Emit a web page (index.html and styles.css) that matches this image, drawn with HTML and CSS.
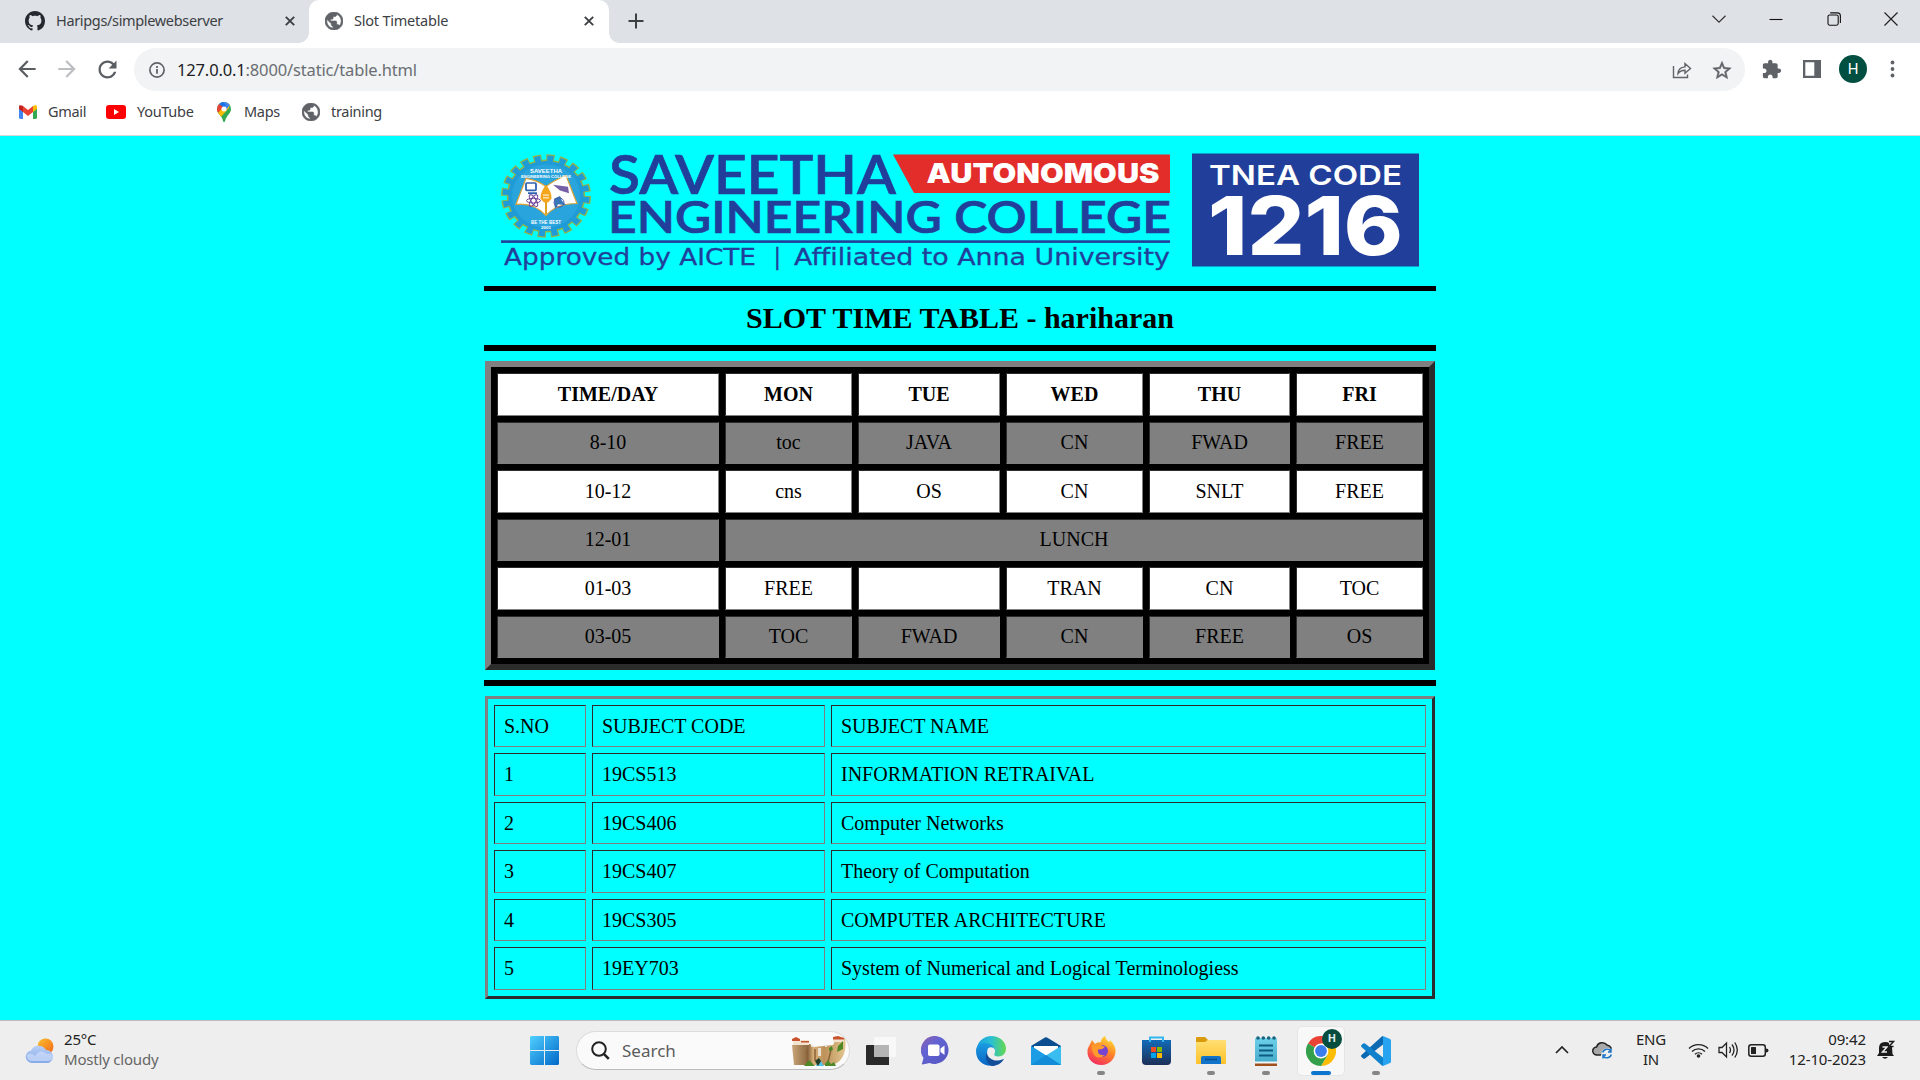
FILE: index.html
```html
<!DOCTYPE html>
<html lang="en">
<head>
<meta charset="utf-8">
<title>Slot Timetable</title>
<link rel="stylesheet" href="styles.css">
</head>
<body>
<svg class="defs" width="0" height="0" aria-hidden="true">
  <symbol id="globe" viewBox="2 2 20 20"><path d="M12 2C6.48 2 2 6.48 2 12s4.48 10 10 10 10-4.48 10-10S17.52 2 12 2zm-1 17.93c-3.95-.49-7-3.85-7-7.93 0-.62.08-1.21.21-1.79L9 15v1c0 1.1.9 2 2 2v1.93zm6.9-2.54c-.26-.81-1-1.39-1.9-1.39h-1v-3c0-.55-.45-1-1-1H8v-2h2c.55 0 1-.45 1-1V7h2c1.1 0 2-.9 2-2v-.41c2.93 1.19 5 4.06 5 7.41 0 2.08-.8 3.97-2.1 5.39z" fill="#5f6368" stroke="#5f6368" stroke-width=".7"/></symbol>
  <symbol id="cross" viewBox="0 0 10 10"><path d="M.8.8l8.4 8.4M9.2.8L.8 9.2" stroke="#3c4043" stroke-width="1.9"/></symbol>
</svg>

<header class="browser">
  <div class="tabstrip">
    <div class="tab">
      <svg class="fav-gh" viewBox="0 0 16 16" width="20" height="20"><path fill="#24292f" d="M8 0C3.58 0 0 3.58 0 8c0 3.54 2.29 6.53 5.47 7.59.4.07.55-.17.55-.38 0-.19-.01-.82-.01-1.49-2.01.37-2.53-.49-2.69-.94-.09-.23-.48-.94-.82-1.13-.28-.15-.68-.52-.01-.53.63-.01 1.08.58 1.23.82.72 1.21 1.87.87 2.33.66.07-.52.28-.87.51-1.07-1.78-.2-3.64-.89-3.64-3.95 0-.87.31-1.59.82-2.15-.08-.2-.36-1.02.08-2.12 0 0 .67-.21 2.2.82.64-.18 1.32-.27 2-.27s1.36.09 2 .27c1.53-1.04 2.2-.82 2.2-.82.44 1.1.16 1.92.08 2.12.51.56.82 1.27.82 2.15 0 3.07-1.87 3.75-3.65 3.95.29.25.54.73.54 1.48 0 1.07-.01 1.93-.01 2.2 0 .21.15.46.55.38A8.01 8.01 0 0 0 16 8c0-4.42-3.58-8-8-8z"/></svg>
      <span class="tab-title t1">Haripgs/simplewebserver</span>
      <svg width="10" height="10"><use href="#cross"/></svg>
    </div>
    <div class="tab active">
      <svg width="18" height="18"><use href="#globe"/></svg>
      <span class="tab-title t2">Slot Timetable</span>
      <svg width="10" height="10"><use href="#cross"/></svg>
    </div>
    <svg class="plus" width="16" height="16" viewBox="0 0 16 16"><path d="M8 .5v15M.5 8h15" stroke="#3c4043" stroke-width="2"/></svg>
    <div class="winctl">
      <svg width="14" height="14" viewBox="0 0 14 14"><path d="M.5 3.8L7 10.2l6.5-6.4" fill="none" stroke="#333" stroke-width="1.2"/></svg>
      <svg width="14" height="14" viewBox="0 0 14 14"><path d="M.5 7.5h13" stroke="#111" stroke-width="1.1"/></svg>
      <svg width="14" height="14" viewBox="0 0 14 14"><rect x="1" y="3" width="10.2" height="10.2" rx="1.6" fill="none" stroke="#111" stroke-width="1.1"/><path d="M3.2.9h7.2a3 3 0 0 1 3 3v7" fill="none" stroke="#111" stroke-width="1.1"/></svg>
      <svg width="14" height="14" viewBox="0 0 14 14"><path d="M.5.5l13 13M13.500.5l-13 13" stroke="#222" stroke-width="1.2"/></svg>
    </div>
  </div>
  <div class="toolbar">
    <svg width="26" height="26" viewBox="0 0 24 24"><path fill="#5a5d61" d="M20 11H7.83l5.59-5.590L12 4l-8 8 8 8 1.410-1.410L7.830 13H20v-2z"/></svg>
    <svg width="26" height="26" viewBox="0 0 24 24"><path fill="#bcbec1" d="M4 11h12.170l-5.590-5.590L12 4l8 8-8 8-1.410-1.410L16.170 13H4v-2z"/></svg>
    <svg width="27" height="27" viewBox="0 0 24 24"><path fill="#5a5d61" d="M17.650 6.350C16.200 4.900 14.210 4 12 4c-4.420 0-7.990 3.580-7.990 8s3.570 8 7.990 8c3.730 0 6.840-2.550 7.730-6h-2.080c-.82 2.330-3.040 4-5.650 4-3.310 0-6-2.690-6-6s2.690-6 6-6c1.660 0 3.140.69 4.220 1.780L13 11h7V4l-2.350 2.350z"/></svg>
    <div class="omnibox">
      <svg width="16" height="16" viewBox="0 0 16 16"><circle cx="8" cy="8" r="7.1" fill="none" stroke="#5f6368" stroke-width="1.700"/><path d="M8 7v4.800M8 4v1.900" stroke="#5f6368" stroke-width="1.800"/></svg>
      <span class="url"><b>127.0.0.1</b>:8000/static/table.html</span>
      <svg class="share" width="20" height="18" viewBox="0 0 20 18"><path d="M1.500 5v11.500H15.500V13.500M6 12.500c.3-4 2.800-6.300 7-6.600V2.500l5.500 5-5.500 4.800V9.200c-3.200 0-5.400 1-7 3.300z" fill="none" stroke="#5f6368" stroke-width="1.400"/></svg>
      <svg width="20" height="20" viewBox="1.200 1 21.600 21"><path fill="#5f6368" stroke="#5f6368" stroke-width=".5" d="M22 9.240l-7.190-.62L12 2 9.190 8.630 2 9.240l5.460 4.730L5.820 21 12 17.270 18.180 21l-1.630-7.030L22 9.240zM12 15.400l-3.760 2.270 1-4.280-3.320-2.880 4.380-.38L12 6.100l1.710 4.040 4.380.38-3.320 2.880 1 4.280L12 15.400z"/></svg>
    </div>
    <svg class="ext" width="20" height="20" viewBox="1 0 23 23"><path fill="#5f6368" d="M20.500 11H19V7c0-1.100-.9-2-2-2h-4V3.500C13 2.120 11.880 1 10.500 1S8 2.120 8 3.500V5H4c-1.100 0-1.990.9-1.990 2v3.800H3.500c1.490 0 2.700 1.210 2.700 2.700s-1.210 2.700-2.700 2.700H2V20c0 1.100.9 2 2 2h3.800v-1.500c0-1.490 1.210-2.700 2.700-2.700 1.490 0 2.700 1.210 2.700 2.700V22H17c1.100 0 2-.9 2-2v-4h1.500c1.380 0 2.500-1.120 2.500-2.500S21.880 11 20.500 11z"/></svg>
    <svg class="panel" width="18" height="18" viewBox="0 0 18 18"><path fill="#5f6368" fill-rule="evenodd" d="M0 0h18v18H0zM2.300 2.300v13.400h9V2.300z"/></svg>
    <span class="avatar">H</span>
    <svg class="dots" width="5" height="18" viewBox="0 0 5 18"><g fill="#5f6368"><circle cx="2.500" cy="2.500" r="1.900"/><circle cx="2.500" cy="9" r="1.900"/><circle cx="2.500" cy="15.500" r="1.900"/></g></svg>
  </div>
  <nav class="bookmarks">
    <a class="bm gmail"><svg width="18" height="14" viewBox="0 0 18 14"><path fill="#4285f4" d="M0 1.500V12.600Q0 14 1.400 14H4V5.500z"/><path fill="#34a853" d="M18 1.500V12.600Q18 14 16.600 14H14V5.500z"/><path fill="#fbbc04" d="M14 1v6l4-3V1.600C18 0 16 0 14 1z"/><path fill="#c5221f" d="M4 1v6L0 4V1.600C0 0 2 0 4 1z"/><path fill="#ea4335" d="M4 1v6l5 4 5-4V1L9 5z"/></svg><span>Gmail</span></a>
    <a class="bm youtube"><svg width="20" height="14" viewBox="0 0 20 14"><rect width="20" height="14" rx="3" fill="#f00"/><path fill="#fff" d="M8 4v6l5-3z"/></svg><span>YouTube</span></a>
    <a class="bm maps"><svg width="14" height="20" viewBox="0 0 14 20"><clipPath id="pin"><path d="M7 0a7 7 0 0 1 7 7c0 4.500-4.500 6.500-5.800 11.500C7.800 20.500 6.300 20.500 5.900 18.500 5 13.500 0 12 0 7a7 7 0 0 1 7-7z"/></clipPath><g clip-path="url(#pin)"><path fill="#34a853" d="M0 0h14v20H0z"/><path fill="#fbbc04" d="M0 11L14-4 12 6 3 16z"/><path fill="#4285f4" d="M4-1h12L9 8 7 5z"/><path fill="#1a73e8" d="M0 0h6l3 3-3 4z"/><path fill="#ea4335" d="M0 2l2 0 4 3-5 6-3-2z"/></g><circle cx="7" cy="6.900" r="2.500" fill="#fff"/></svg><span>Maps</span></a>
    <a class="bm training"><svg width="18" height="18"><use href="#globe"/></svg><span>training</span></a>
  </nav>
</header>

<main class="page">
  <div class="content">
    <svg class="banner" width="952" height="150" viewBox="484 136 952 150">
      <g transform="translate(546 196) scale(1 .93)">
        <circle r="40.500" fill="none" stroke="#8fb44c" stroke-width="9" stroke-dasharray="8 4.723"/>
        <circle r="38.500" fill="#1f9bd7" stroke="#8fb44c" stroke-width="1.500"/>
        <circle r="40" fill="none" stroke="#1f9bd7" stroke-width="7" stroke-dasharray="6 6.566" stroke-dashoffset="-1"/>
        <circle r="34" fill="#2aa4dc"/>
        <path d="M-20-19Q-8-17 0-10Q8-17 20-22L31 8Q10 8 0 21Q-12 7-30 9z" fill="#fff" stroke="#d9a437" stroke-width="1.200"/>
        <path d="M0-10V20" stroke="#e0a020" stroke-width="2"/>
        <path d="M0-12Q6-4 5.500 3L2 7h-4L-5.500 3Q-6-4 0-12z" fill="#f3a51c"/>
        <path d="M-3-1h6M-3 2h6" stroke="#fff" stroke-width="1"/>
        <rect x="-20" y="-14" width="10" height="8" rx="1" fill="#fff" stroke="#2d62ae" stroke-width="1.800"/><path d="M-18-3h9" stroke="#2d62ae" stroke-width="2"/>
        <path d="M7-12l15 2 1 7-9-3z" fill="#7560a8"/>
        <g fill="none" stroke="#6a3f98" stroke-width="1"><ellipse cx="-12.500" cy="5" rx="7" ry="2.500"/><ellipse cx="-12.500" cy="5" rx="7" ry="2.500" transform="rotate(60 -12.500 5)"/><ellipse cx="-12.500" cy="5" rx="7" ry="2.500" transform="rotate(120 -12.500 5)"/></g>
        <path d="M8 3l6-3 2 5 4 5-8-1-3 6z" fill="#3677b9"/><circle cx="13" cy="7" r="5" fill="none" stroke="#4b54a4"/>
        <text x="-16" y="-25" class="crest" font-size="5.500" textLength="32" lengthAdjust="spacingAndGlyphs">SAVEETHA</text>
        <text x="-25" y="-19.500" class="crest" font-size="4" textLength="50" lengthAdjust="spacingAndGlyphs">ENGINEERING COLLEGE</text>
        <text x="-15" y="30" class="crest" font-size="5" textLength="30" lengthAdjust="spacingAndGlyphs">BE THE BEST</text>
        <text x="-5" y="35.500" class="crest" font-size="4.500">2001</text>
      </g>
      <path d="M893 154.500H1170V193H914z" fill="#e32d2b"/>
      <g fill="#213f9a">
        <text class="lato" x="609" y="194" font-size="54.500" textLength="287" lengthAdjust="spacingAndGlyphs">SAVEETHA</text>
        <text class="lato" x="608" y="233.300" font-size="44.500" textLength="563" lengthAdjust="spacingAndGlyphs">ENGINEERING COLLEGE</text>
        <rect x="501" y="240.300" width="669" height="2.600"/>
        <text class="wide" x="504" y="264.500" font-size="22.500" textLength="252" lengthAdjust="spacingAndGlyphs">Approved by AICTE</text>
        <text class="wide" x="773.500" y="264.500" font-size="22.500">|</text>
        <text class="wide" x="794" y="264.500" font-size="22.500" textLength="376" lengthAdjust="spacingAndGlyphs">Affiliated to Anna University</text>
        <rect x="1192" y="153.500" width="227" height="113"/>
      </g>
      <g fill="#fff">
        <text class="heavy" x="926.500" y="183.200" font-size="27" textLength="233" lengthAdjust="spacingAndGlyphs">AUTONOMOUS</text>
        <text class="inter" x="1209" y="185" font-size="27" textLength="193" lengthAdjust="spacingAndGlyphs">TNEA CODE</text>
        <text class="mont" x="1208" y="254.500" font-size="81" textLength="195" lengthAdjust="spacingAndGlyphs">1216</text>
      </g>
    </svg>
    <div class="rule first"></div>
    <h2>SLOT TIME TABLE - hariharan</h2>
    <div class="rule"></div>

    <table class="slots">
      <colgroup><col class="c222"><col class="c127"><col class="c142"><col class="c137"><col class="c141"><col class="c127"></colgroup>
      <tr class="tall"><th>TIME/DAY</th><th>MON</th><th>TUE</th><th>WED</th><th>THU</th><th>FRI</th></tr>
      <tr class="short gray"><td>8-10</td><td>toc</td><td>JAVA</td><td>CN</td><td>FWAD</td><td>FREE</td></tr>
      <tr class="tall"><td>10-12</td><td>cns</td><td>OS</td><td>CN</td><td>SNLT</td><td>FREE</td></tr>
      <tr class="short gray"><td>12-01</td><td colspan="5">LUNCH</td></tr>
      <tr class="tall"><td>01-03</td><td>FREE</td><td></td><td>TRAN</td><td>CN</td><td>TOC</td></tr>
      <tr class="short gray"><td>03-05</td><td>TOC</td><td>FWAD</td><td>CN</td><td>FREE</td><td>OS</td></tr>
    </table>

    <div class="rule"></div>

    <table class="subjects">
      <colgroup><col class="c92"><col class="c233"><col class="c595"></colgroup>
      <tr class="short"><td>S.NO</td><td>SUBJECT CODE</td><td>SUBJECT NAME</td></tr>
      <tr class="tall"><td>1</td><td>19CS513</td><td>INFORMATION RETRAIVAL</td></tr>
      <tr class="short"><td>2</td><td>19CS406</td><td>Computer Networks</td></tr>
      <tr class="tall"><td>3</td><td>19CS407</td><td>Theory of Computation</td></tr>
      <tr class="short"><td>4</td><td>19CS305</td><td>COMPUTER ARCHITECTURE</td></tr>
      <tr class="tall"><td>5</td><td>19EY703</td><td>System of Numerical and Logical Terminologiess</td></tr>
    </table>
  </div>
</main>

<footer class="taskbar">
  <div class="weather">
    <svg width="30" height="26" viewBox="0 0 30 26"><defs><linearGradient id="sun" x2="1" y2="1"><stop stop-color="#fbc02d"/><stop offset="1" stop-color="#f4661b"/></linearGradient><linearGradient id="cl" x2="0" y2="1"><stop stop-color="#b9d0f7"/><stop offset="1" stop-color="#86a9e8"/></linearGradient></defs><circle cx="20.500" cy="8.500" r="8" fill="url(#sun)"/><path fill="url(#cl)" d="M6.500 25a6.300 6.300 0 0 1-.5-12.500A8.500 8.500 0 0 1 21 12a6.700 6.700 0 0 1 2.500 13z"/><path d="M2 17q4-3 8 1q5-8 12-2q5-1 6 3q-1 4-5 4H7q-5 0-5-6z" fill="#d5e2fb" opacity=".6"/></svg>
    <div class="weather-text"><span class="temp">25°C</span><span class="cond">Mostly cloudy</span></div>
  </div>

  <div class="apps">
    <div class="slot start"><svg width="29" height="29" viewBox="0 0 29 29"><defs><linearGradient id="win" x2="1" y2="1"><stop stop-color="#50d0ff"/><stop offset="1" stop-color="#0067c8"/></linearGradient></defs><path fill="url(#win)" d="M1 0h13v14H0V1zM15 0h13l1 1v13H15zM0 15h14v14H1l-1-1zM15 15h14v13l-1 1H15z"/></svg></div>
    <div class="search">
      <svg width="19" height="19" viewBox="0 0 19 19"><circle cx="8" cy="8" r="6.800" fill="none" stroke="#222" stroke-width="2"/><path d="M12.800 12.800l5 5" stroke="#222" stroke-width="2.600"/></svg>
      <span>Search</span>
      <svg class="scene" width="56" height="30" viewBox="0 0 56 30"><defs><linearGradient id="rock"><stop stop-color="#c9a577"/><stop offset=".3" stop-color="#8c6740"/><stop offset=".4" stop-color="#d8b079"/><stop offset=".6" stop-color="#bd9159"/><stop offset="1" stop-color="#e3c690"/></linearGradient></defs><path d="M1 9l18-1 4 3 19-2 3-6 9-1q2 12-3 20-5 7-12 7H3z" fill="url(#rock)"/><path d="M2 4l3-2 3 2h10v5H2zM42 2l4-2 7 2v4H42z" fill="#f2e4d0"/><path d="M1 3l4-2 4 2v2H1zM10 5h8v1.500h-8zM42 1l5-1 6 2v1.500H42z" fill="#c9532f"/><path d="M27 12h3v8h-3zM20 9h2v2h-2zM34 9h2v2h-2z" fill="#e9e2d4"/><path d="M16 13v15M24 13v12M40 14l-3 12" stroke="#8a6238" stroke-width="1.500"/><path d="M25 30l3-8 5 8z" fill="#54c3e4"/><path d="M13 30l5-6 6 6zM34 28l3-4 3 4 3-2 2 4H34zM47 10l5-5v8l-6 3zM38 12l3-2 1 4-4 1z" fill="#4d8a27"/><path d="M24 25l4-3 2 3-3 5z" fill="#233c28"/></svg>
    </div>
    <div class="slot"><svg width="30" height="28" viewBox="0 0 30 28"><path d="M1 8h22v20H1q-1 0-1-1V9q0-1 1-1z" fill="#2a2a2a"/><rect x="8" width="22" height="20" rx="1" fill="#fafafa" opacity=".82"/><path d="M8 8h15v12H8z" fill="#aaa" opacity=".75"/></svg></div>
    <div class="slot"><svg width="30" height="29" viewBox="0 0 30 29"><defs><linearGradient id="chat" x2=".8" y2="1"><stop stop-color="#925ea8"/><stop offset=".4" stop-color="#6264d4"/><stop offset="1" stop-color="#5556c0"/></linearGradient></defs><path fill="url(#chat)" d="M15 0a14 14 0 1 1-6.500 27L1.500 28.500Q.5 28.500 1 27.500L2.500 22A14 14 0 0 1 15 0z"/><rect x="7" y="8.500" width="11.500" height="11.500" rx="1.800" fill="#fff"/><path d="M19.500 12.500l4-3v9.500l-4-3z" fill="#fff"/></svg></div>
    <div class="slot"><svg width="30" height="30" viewBox="0 0 30 30"><defs><linearGradient id="e1"><stop stop-color="#1aa0e0"/><stop offset=".5" stop-color="#2cc0d2"/><stop offset="1" stop-color="#64d84d"/></linearGradient><linearGradient id="e2" x2="0" y2="1"><stop stop-color="#1b9de2"/><stop offset="1" stop-color="#0864c4"/></linearGradient></defs><path fill="url(#e1)" d="M1 11C3 4 9 0 15 0c9 0 15 6 15 12.500 0 5-3.500 8-7.500 8-3 0-5-1-4-3 2-4-1-7-5-7z"/><path fill="url(#e2)" d="M0 15C0 8 6 6.500 10 7c6 .8 9 4.500 8.500 7.500C17 11.500 12 12 11 17c-1 6 3 11 9 12C10 32 0 26 0 15z"/><path fill="#124e9a" d="M11 16c0 6 6 9 11 8.500 3-.3 4.500-1.500 6-1.500C25 28 20 30 16 30 11 28 8 22 11 16z"/><circle cx="15" cy="15" r="3.700" fill="#eee"/></svg></div>
    <div class="slot"><svg width="30" height="28" viewBox="0 0 30 28"><path d="M0 9L14 .5q1-.6 2 0L30 9v6H0z" fill="#0c4f91"/><path d="M3 9h24v8l-12 6L3 17z" fill="#fff"/><path d="M0 9l15 9.500L30 9v19H0z" fill="#39bdf0"/><path d="M15 18.500L30 28H0V9z" fill="#1c9ce4"/><path d="M0 28L15 18l15 10z" fill="#138bd6"/></svg></div>
    <div class="slot run"><svg width="29" height="29" viewBox="0 0 29 29"><defs><linearGradient id="fx" x1=".8" x2=".3" y2="1"><stop stop-color="#ffe43b"/><stop offset=".45" stop-color="#ff8a25"/><stop offset="1" stop-color="#f32c5f"/></linearGradient></defs><path fill="url(#fx)" d="M5 4l3 4q2-2 6-2 0-4 4-6 1 4 4 6 1-1 1-2c4 4 6 8 5.500 12C28 23 22 29 14.500 29 6 29 0 23 .5 15 .7 11 3 9 5 4z"/><circle cx="15" cy="15" r="6" fill="#7843cf"/><path d="M5 9q7-2 13 2-3 3-7 2.500Q10 20 18 19q-8 6-12-2-2-4-1-8z" fill="#ff9b2c"/></svg></div>
    <div class="slot"><svg width="29" height="29" viewBox="0 0 29 29"><defs><linearGradient id="st" x2="0" y2="1"><stop stop-color="#116bb8"/><stop offset="1" stop-color="#1d2f57"/></linearGradient></defs><path d="M0 4h29v21q0 4-4 4H4q-4 0-4-4z" fill="url(#st)"/><path d="M8 6V1.500h13V6" fill="none" stroke="#35b6ee" stroke-width="2"/><path fill="#f25022" d="M9 11h5v5H9z"/><path fill="#7fba00" d="M15 11h5v5h-5z"/><path fill="#00a4ef" d="M9 17h5v5H9z"/><path fill="#ffb900" d="M15 17h5v5h-5z"/></svg></div>
    <div class="slot run"><svg width="30" height="27" viewBox="0 0 30 27"><path d="M0 1q0-1 1-1h8l3 3-2 4H0z" fill="#d99b0c"/><defs><linearGradient id="fd" x2="0" y2="1"><stop stop-color="#ffdf73"/><stop offset="1" stop-color="#fcc128"/></linearGradient></defs><path d="M0 5h9l3-2h17q1 0 1 1v22q0 1-1 1H1q-1 0-1-1z" fill="url(#fd)"/><path d="M5 27v-6q0-2 2-2h16q2 0 2 2v6z" fill="#1173c9"/><path d="M9 22.500h12" stroke="#0b4f92" stroke-width="1.500"/></svg></div>
    <div class="slot run"><svg width="22" height="30" viewBox="0 0 22 30"><defs><linearGradient id="np" x2="0" y2="1"><stop stop-color="#6ed0ea"/><stop offset="1" stop-color="#45abc9"/></linearGradient></defs><rect y="2" width="22" height="25" rx="1" fill="url(#np)"/><path d="M0 25.500h22v2H0z" fill="#eef6f8"/><path d="M0 27.500h22V30H0z" fill="#a0501c"/><path d="M4 9.500h14M4 14.500h14M4 19.500h14" stroke="#0b5c80" stroke-width="1.800"/><g fill="#17627f"><circle cx="3" cy="2" r="1.800"/><circle cx="8.300" cy="2" r="1.800"/><circle cx="13.700" cy="2" r="1.800"/><circle cx="19" cy="2" r="1.800"/></g></svg></div>
    <div class="slot current"><svg width="30" height="30" viewBox="0 0 30 30"><path fill="#ea4335" d="M15 15L2 7.500A15 15 0 0 1 28 7.500H15z"/><path fill="#fbbc04" d="M15 15V7.500h13A15 15 0 0 1 15 30l6.500-11z"/><path fill="#34a04b" d="M15 15l6.500 4L15 30A15 15 0 0 1 2 7.500z"/><circle cx="15" cy="15" r="7.400" fill="#fff"/><circle cx="15" cy="15" r="5.900" fill="#3b7ded"/></svg><span class="badge">H</span></div>
    <div class="slot run"><svg width="30" height="30" viewBox="0 0 30 30"><path d="M22 0l7 3q1 .5 1 1.500v21q0 1-1 1.500l-7 3z" fill="#27a3ef"/><path d="M22 0v8.500L4 22.500q-1 .7-1.800 0L.5 21q-1-1 0-2L20.500.8z" fill="#0b68b3"/><path d="M22 30v-8.500L4 7.500q-1-.7-1.800 0L.5 9q-1 1 0 2l20 18.200z" fill="#0f80cc"/></svg></div>
  </div>

  <div class="tray">
    <svg class="up" width="14" height="8" viewBox="0 0 14 8"><path d="M1 7l6-6 6 6" fill="none" stroke="#222" stroke-width="1.700"/></svg>
    <svg class="cloud" width="21" height="18" viewBox="0 0 21 18"><path d="M5 14a4 4 0 0 1-.5-8A6 6 0 0 1 15 4q4 1 5 5v5z" fill="#a8a8a8"/><path d="M9 14H5a4 4 0 0 1-.5-8A6 6 0 0 1 15 4q3 .5 4.500 3.500" fill="none" stroke="#222" stroke-width="1.500"/><circle cx="15" cy="12.500" r="5.500" fill="#eee"/><path d="M10.700 11.500a4.500 4.500 0 0 1 8-1.500M19.300 13.500a4.500 4.500 0 0 1-8 1.500M19 7.500V11h-3M11 17.500V14h3" fill="none" stroke="#1971c8" stroke-width="1.400"/></svg>
    <div class="lang"><span>ENG</span><span>IN</span></div>
    <svg class="wifi" width="21" height="15" viewBox="0 0 21 15"><g fill="none" stroke="#222" stroke-width="1.400"><path d="M1 5.500a13.500 13.500 0 0 1 19 0M4 8.500a9.300 9.300 0 0 1 13 0M7 11.300a5 5 0 0 1 7 0"/></g><circle cx="10.500" cy="13" r="1.800" fill="#222"/></svg>
    <svg class="vol" width="21" height="18" viewBox="0 0 21 18"><g fill="none" stroke="#222" stroke-width="1.300"><path d="M1 6.500h3l4.500-4.500v14L4 11.500H1z"/><path d="M11.500 6q2 3 0 6M14 3.500q4 5.500 0 11M16.800 1.500q5 7.500 0 15"/></g></svg>
    <svg class="bat" width="21" height="13" viewBox="0 0 21 13"><rect x=".8" y=".8" width="16.500" height="11.400" rx="2.500" fill="none" stroke="#222" stroke-width="1.500"/><rect x="3" y="3" width="5" height="7" rx=".5" fill="#222"/><path d="M18 4.500q2.500 0 2.500 2t-2.500 2z" fill="#222"/></svg>
    <div class="clock"><span>09:42</span><span>12-10-2023</span></div>
    <svg class="bell" width="18" height="20" viewBox="0 0 18 20"><path d="M2 8q0-6 6-6t7 5l.5 7 1.500 2H0l2-3zM5 17h6q-3 3.500-6 0z" fill="#1b1b1b"/><path d="M5.500 7H10l-4.500 5H10" fill="none" stroke="#eee" stroke-width="1.500"/><path d="M11 0h7v7h-5z" fill="#eee"/><path d="M12 1.500h4.500l-4.500 5h4.500" fill="none" stroke="#1b1b1b" stroke-width="1.400"/></svg>
  </div>
</footer>
</body>
</html>
```
FILE: styles.css
```css
* { box-sizing: border-box; }

body {
  margin: 0;
  width: 1920px;
  height: 1080px;
  overflow: hidden;
  display: flex;
  flex-direction: column;
  font-family: "Noto Sans", "Open Sans", sans-serif;
  font-size: 15px;
  color: #3c4043;
}

svg { display: block; flex: none; }
span { white-space: nowrap; }
.defs { display: none; }

/* Browser chrome */
.browser { height: 136px; background: #fff; border-bottom: 1px solid #d5d7da; flex: none; }

.tabstrip { display: flex; height: 43px; background: #dee1e6; align-items: center; }
.tab { display: flex; align-items: center; height: 43px; width: 309px; padding: 0 14px 1px 25px; border-radius: 0 0 10px 0; }
.tab.active {
  position: relative;
  width: 300px;
  padding: 0 15px 1px 16px;
  background: #fff;
  border-radius: 10px 10px 0 0;
}
.tab.active::before, .tab.active::after {
  content: "";
  position: absolute;
  bottom: 0;
  width: 10px;
  height: 10px;
}
.tab.active::before { left: -10px; background: radial-gradient(circle at 0 0, #dee1e6 9.5px, #fff 10px); }
.tab.active::after { right: -10px; background: radial-gradient(circle at 100% 0, #dee1e6 9.5px, #fff 10px); }
.tab-title { flex: 1; margin-left: 11px; padding-bottom: 3px; font-size: 14.5px; }
.t1 { letter-spacing: -.34px; }
.t2 { letter-spacing: -.22px; }
.plus { margin: 0 0 1px 19px; }
.winctl { display: flex; gap: 43.5px; margin: -6px 22px 0 auto; }

.toolbar { display: flex; align-items: center; height: 52px; }
.toolbar > svg:nth-child(1) { margin-left: 14px; }
.toolbar > svg:nth-child(2) { margin-left: 14px; }
.toolbar > svg:nth-child(3) { margin-left: 14px; }
.omnibox {
  display: flex;
  align-items: center;
  width: 1611px;
  height: 43px;
  margin: 1px 0 0 13px;
  padding: 0 13px 0 15px;
  border-radius: 22px;
  background: #f1f3f4;
}
.url { flex: 1; margin-left: 12px; padding-bottom: 1px; font-size: 16.5px; letter-spacing: -.15px; color: #6a6e73; }
.url b { font-weight: 400; color: #202124; }
.share { margin-right: 20px; }
.ext { margin-left: 17px; }
.panel { margin-left: 21px; }
.avatar {
  width: 28px;
  height: 28px;
  margin-left: 18px;
  border-radius: 50%;
  background: #004f40;
  color: #fff;
  font: 15px/28px Roboto, sans-serif;
  text-align: center;
}
.dots { margin-left: 23px; }

.bookmarks { display: flex; align-items: center; height: 34px; padding-left: 19px; font-size: 14.5px; letter-spacing: -.3px; }
.bm { display: flex; align-items: center; gap: 11px; }
.bm span { padding-bottom: 2px; }
.gmail { width: 87px; }
.youtube { width: 111px; }
.maps { width: 85px; gap: 13px; }

/* Timetable page */
.page { height: 884px; flex: none; background: #0ff; color: #000; font-family: "Liberation Serif", serif; font-size: 20px; }
.content { width: 952px; margin: 0 auto; }
.rule { height: 6px; background: #000; }
.rule.first { height: 5px; }
h2 { margin: 0; height: 54px; font-size: 30px; line-height: 54px; text-align: center; }

table { width: 950px; margin: 10px 1px; table-layout: fixed; border-collapse: separate; border-spacing: 6px; border-style: solid; border-color: #808080 #2c2c2c #2c2c2c #808080; }
th, td { border: 1px solid; border-color: #2c2c2c #808080 #808080 #2c2c2c; line-height: 22px; vertical-align: top; }
.tall { height: 43px; }
.short { height: 42px; }
.slots { border-width: 6px; background: #000; text-align: center; }
.slots th, .slots td { padding: 9px 0 0; background: #fff; }
.slots .gray td { padding-top: 8px; background: #808080; }
.subjects { border-width: 3px; margin-bottom: 0; }
.subjects td { padding: 9px 9px 0; }
.c222 { width: 222px; }
.c142 { width: 142px; }
.c141 { width: 141px; }
.c137 { width: 137px; }
.c127 { width: 127px; }
.c92 { width: 92px; }
.c233 { width: 233px; }
.c595 { width: 595px; }

.lato { font-family: Lato, sans-serif; font-weight: 600; stroke: #213f9a; stroke-width: .7px; }
.inter { font-family: Inter, sans-serif; font-weight: 600; }
.mont { font-family: Inter, sans-serif; font-weight: 800; }
.heavy { font-family: Inter, sans-serif; font-weight: 900; }
.wide { font-family: "DejaVu Sans", sans-serif; font-variant-ligatures: none; stroke: #213f9a; stroke-width: .3px; }
.crest { font-family: "Liberation Sans", sans-serif; font-weight: 700; fill: #fff; }

/* Taskbar */
.taskbar { display: flex; height: 60px; flex: none; background: #eee; border-top: 1px solid #bdbdbd; color: #222; }
.weather { display: flex; align-items: center; width: 520px; padding-left: 25px; gap: 9px; }
.weather-text { display: flex; flex-direction: column; padding-bottom: 4px; font-size: 15px; line-height: 20px; letter-spacing: -.2px; }
.cond { color: #666; }

.apps { display: flex; align-items: center; gap: 7px; }
.slot { position: relative; display: flex; align-items: center; justify-content: center; width: 48px; height: 50px; border-radius: 5px; }
.start { width: 49px; }
.run::after, .current::after {
  content: "";
  position: absolute;
  bottom: 1px;
  left: 20px;
  width: 8px;
  height: 4px;
  border-radius: 2px;
  background: #858585;
}
.current { background: #f8f8f8; border: 1px solid #e5e5e5; }
.current::after { left: 13px; bottom: 0; width: 20px; background: #0a74cf; }
.badge {
  position: absolute;
  top: 2px;
  right: 2px;
  width: 20px;
  height: 20px;
  border-radius: 50%;
  background: #064d40;
  color: #e0eeeb;
  font: 700 11px/20px Roboto, sans-serif;
  text-align: center;
}
.search {
  display: flex;
  align-items: center;
  width: 274px;
  height: 39px;
  padding: 0 2px 0 14px;
  border: 1px solid #dcdcdc;
  border-bottom-color: #bbb;
  border-radius: 20px;
  background: #fafafa;
}
.search span { flex: 1; margin-left: 12px; font-size: 17px; color: #5c5c5c; }

.tray { display: flex; align-items: center; margin-left: auto; padding-right: 25px; font-size: 15px; line-height: 20px; }
.tray svg { margin-bottom: 1px; }
.cloud { margin-left: 23px; }
.lang { display: flex; flex-direction: column; align-items: center; width: 40px; margin-left: 18px; padding-bottom: 3px; letter-spacing: -.2px; }
.wifi { margin-left: 17px; }
.vol { margin-left: 9px; }
.bat { margin-left: 9px; }
.clock { display: flex; flex-direction: column; align-items: flex-end; width: 86px; margin-left: 11px; padding-bottom: 4px; letter-spacing: -.1px; }
.bell { margin-left: 11px; }
```
